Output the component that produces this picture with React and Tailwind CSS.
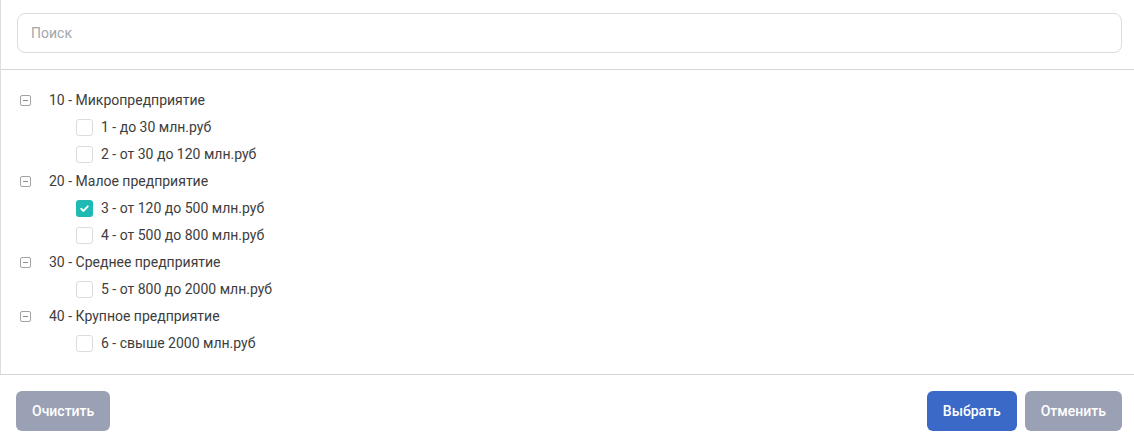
import { useState } from "react";

// Tree-select dialog body: search box, grouped checkbox tree, footer actions.

const GROUPS = [
  {
    id: "10",
    label: "10 - Микропредприятие",
    children: [
      { id: "1", label: "1 - до 30 млн.руб" },
      { id: "2", label: "2 - от 30 до 120 млн.руб" },
    ],
  },
  {
    id: "20",
    label: "20 - Малое предприятие",
    children: [
      { id: "3", label: "3 - от 120 до 500 млн.руб" },
      { id: "4", label: "4 - от 500 до 800 млн.руб" },
    ],
  },
  {
    id: "30",
    label: "30 - Среднее предприятие",
    children: [{ id: "5", label: "5 - от 800 до 2000 млн.руб" }],
  },
  {
    id: "40",
    label: "40 - Крупное предприятие",
    children: [{ id: "6", label: "6 - свыше 2000 млн.руб" }],
  },
];

function MinusBox() {
  return (
    <span className="flex h-[11px] w-[11px] items-center justify-center rounded-[2px] border border-[#a3a3a3]">
      <span className="h-px w-[5px] bg-[#8c8c8c]" />
    </span>
  );
}

function Check({ checked, onClick }) {
  return (
    <button
      type="button"
      onClick={onClick}
      className={
        checked
          ? "flex h-[17px] w-[17px] items-center justify-center rounded-[3px] bg-[#1fbab4]"
          : "flex h-[17px] w-[17px] items-center justify-center rounded-[3px] border border-[#dcdcdc] bg-white"
      }
    >
      {checked && (
        <svg viewBox="0 0 12 12" className="h-[11px] w-[11px]">
          <path d="M2.4 6.3l2.5 2.4 4.7-5.1" fill="none" stroke="white" strokeWidth="2" strokeLinecap="round" strokeLinejoin="round" />
        </svg>
      )}
    </button>
  );
}

export default function App() {
  const [selected, setSelected] = useState(() => new Set(["3"]));
  const [query, setQuery] = useState("");

  function toggle(id) {
    setSelected((prev) => {
      const next = new Set(prev);
      if (next.has(id)) next.delete(id);
      else next.add(id);
      return next;
    });
  }

  return (
    <div className="h-[444px] w-[1134px] bg-white text-[14px] text-[#3d3d3d] font-['Roboto',sans-serif]">
      <div className="border-l border-[#dedede]">
        <div className="pl-4 pr-3 pt-[13px] pb-[16px]">
          <input
            className="h-[40px] w-full rounded-lg border border-[#dcdcdc] px-[13px] text-[14px] text-[#3d3d3d] outline-none placeholder:text-[#a2a6ad]"
            placeholder="Поиск"
            value={query}
            onChange={(e) => setQuery(e.target.value)}
          />
        </div>
        <div className="border-t border-[#d6d6d6] pt-[17px] pb-[17px]">
          {GROUPS.map((g) => (
            <div key={g.id}>
              <div className="flex h-[27px] items-center pl-[19px]">
                <MinusBox />
                <span className="ml-[18px]">{g.label}</span>
              </div>
              {g.children.map((c) => (
                <div key={c.id} className="flex h-[27px] items-center pl-[75px]">
                  <Check checked={selected.has(c.id)} onClick={() => toggle(c.id)} />
                  <span className="ml-2">{c.label}</span>
                </div>
              ))}
            </div>
          ))}
        </div>
      </div>
      <div className="flex items-center border-t border-[#d6d6d6] pl-4 pr-3 pt-4">
        <button
          type="button"
          className="h-10 rounded-md bg-[#9aa1b4] px-4 font-medium text-white"
          onClick={() => setSelected(new Set())}
        >
          Очистить
        </button>
        <div className="flex-1" />
        <button type="button" className="h-10 rounded-md bg-[#3a69c8] px-4 font-medium text-white">
          Выбрать
        </button>
        <button type="button" className="ml-2 h-10 rounded-md bg-[#9aa1b4] px-4 font-medium text-white">
          Отменить
        </button>
      </div>
    </div>
  );
}
